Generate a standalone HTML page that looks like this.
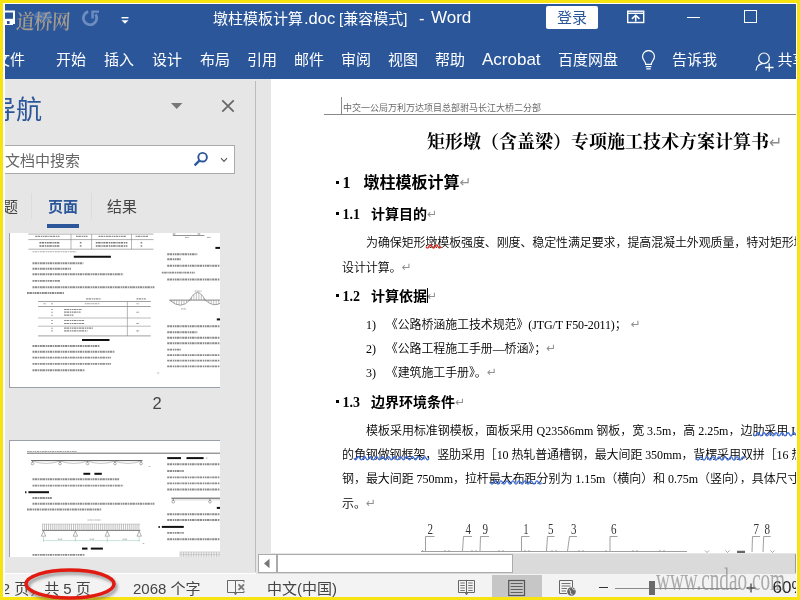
<!DOCTYPE html>
<html lang="zh-CN">
<head>
<meta charset="utf-8">
<title>墩柱模板计算.doc [兼容模式] - Word</title>
<style>
*{box-sizing:border-box;margin:0;padding:0}
html,body{width:800px;height:600px;overflow:hidden;background:#f7e30f}
body{position:relative;font-family:"Liberation Sans","Noto Sans CJK SC",sans-serif;color:#333}
#win{position:absolute;left:3px;top:3px;width:794px;height:594px;background:#fff}
#app{position:absolute;left:5px;top:4px;width:791px;height:593px;overflow:hidden;background:#fff}
#c{position:absolute;left:-5px;top:-4px;width:800px;height:600px;will-change:transform}
#c div,#c span,#c svg{position:absolute}
.t{white-space:nowrap;line-height:1}
/* title + ribbon */
#blue{left:0;top:0;width:800px;height:79px;background:#2b579a}
.tab{top:51.500px;font-size:15px;color:#fff;white-space:nowrap;line-height:15px}
.ti{font-size:15px;line-height:16px;color:#fff}
/* nav */
#nav{left:0;top:79px;width:271px;height:494px;background:#e6e6e6}
#navline{left:255px;top:81px;width:1px;height:491px;background:#bcbcbc}
/* status */
#status{left:0;top:574px;width:800px;height:26px;background:#f3f3f3}
.st{top:580.5px;font-size:15px;line-height:15px;color:#444;white-space:nowrap}
/* doc */
#doc{left:271px;top:79px;width:529px;height:474px;background:#fff;overflow:hidden}
.serif{font-family:"Liberation Serif","Noto Serif CJK SC",serif}

#c .t span{position:static}
.pm{font-family:"DejaVu Sans",sans-serif;color:#909090;font-size:12px;font-weight:400;vertical-align:1px;letter-spacing:0}
.h1{font-size:16px;line-height:22px;font-weight:700;color:#000;font-family:"Liberation Serif","Noto Sans CJK SC",serif}
.h2{font-size:14px;line-height:20px;font-weight:700;color:#000;font-family:"Liberation Serif","Noto Sans CJK SC",serif}
.bd{letter-spacing:-0.12px;font-size:12px;line-height:16px;color:#000;font-weight:350;font-family:"Liberation Serif","Noto Sans CJK SC",serif}
.bl{display:inline-block;width:7px;height:4px;overflow:hidden;vertical-align:4px;font-size:4px;line-height:4px;color:#000;background:#000;width:3px;height:3px;margin-right:3.5px}
.gap{display:inline-block}
.rw{}
.bw{}
</style>
</head>
<body>
<div id="win"></div>
<div id="app"><div id="c">
<div id="blue"></div>
<!-- title bar -->
<svg style="left:0px;top:8px" width="18" height="20" viewBox="0 0 18 20"><path d="M0 3.6H14V16" fill="none" stroke="#fff" stroke-width="2"/><rect x="0" y="10.8" width="13" height="6.2" fill="#fff"/><rect x="7" y="13" width="2.6" height="3" fill="#2b579a"/></svg>
<div style="left:34px;top:12px;width:18px;height:9px;background:#5f86c4;opacity:0.55;border-radius:5px"></div>
<div class="t" id="wm1" style="left:16px;top:8px;font-size:18.5px;line-height:24px;color:#a39b8e;font-family:'Noto Serif CJK SC',serif;font-weight:600;letter-spacing:-0.5px;transform:skewX(-3deg) scaleY(1.12);transform-origin:0 60%">道桥网</div>
<svg style="left:80px;top:8px" width="20" height="20" viewBox="0 0 20 20"><path d="M8.2 3.6A6.7 6.7 0 1 0 15.6 6.3" fill="none" stroke="#6d8dc2" stroke-width="2.7"/><path d="M12.6 10.4V3.6H19" fill="none" stroke="#6d8dc2" stroke-width="2.4"/></svg>
<svg style="left:121px;top:16px" width="8" height="9" viewBox="0 0 8 9"><rect x="0.5" y="1" width="7" height="1.4" fill="#fff"/><path d="M0.5 4.2H7.5L4 7.8Z" fill="#fff"/></svg>
<div class="t ti" style="left:213px;top:11px">墩柱模板计算</div>
<div class="t ti" style="left:304px;top:10px;font-size:16.5px">.doc</div>
<div class="t ti" style="left:339px;top:11px">[兼容模式]</div>
<div class="t ti" style="left:419px;top:10px;font-size:16.5px">-</div>
<div class="t ti" style="left:431px;top:10px;font-size:17px">Word</div>
<div style="left:546px;top:6px;width:52px;height:23px;background:#fff;border-radius:2px"></div>
<div class="t" style="left:557px;top:10px;font-size:15px;line-height:16px;color:#2b579a">登录</div>
<svg style="left:626px;top:9px" width="20" height="16" viewBox="0 0 20 16"><rect x="1.700" y="2.200" width="16" height="11.300" fill="none" stroke="#fff" stroke-width="1.400"/><path d="M1.700 4.300H17.700" stroke="#fff" stroke-width="1.400"/><path d="M9.700 12.500V6.500M5.900 9.900L9.700 6.200L13.500 9.900" fill="none" stroke="#fff" stroke-width="1.500"/></svg>
<div style="left:687px;top:16.500px;width:13px;height:1.500px;background:#fff"></div>
<div style="left:744px;top:10px;width:13px;height:13px;border:1.5px solid #fff"></div>
<!-- ribbon tabs -->
<div class="tab" style="left:-5px">文件</div>
<div class="tab" style="left:56px">开始</div>
<div class="tab" style="left:104px">插入</div>
<div class="tab" style="left:152px">设计</div>
<div class="tab" style="left:200px">布局</div>
<div class="tab" style="left:247px">引用</div>
<div class="tab" style="left:294px">邮件</div>
<div class="tab" style="left:341px">审阅</div>
<div class="tab" style="left:388px">视图</div>
<div class="tab" style="left:435px">帮助</div>
<div class="tab" style="left:482px;font-size:17px;top:52px">Acrobat</div>
<div class="tab" style="left:558px">百度网盘</div>
<svg style="left:640.500px;top:50px" width="15" height="20.500" viewBox="0 0 16 22"><path d="M5 15.5C5 12 1.6 11 1.6 7A6.4 6.4 0 0 1 14.4 7C14.4 11 11 12 11 15.5Z" fill="none" stroke="#fff" stroke-width="1.3"/><path d="M5 17.8H11M5.6 20.2H10.4" stroke="#fff" stroke-width="1.3"/></svg>
<div class="tab" style="left:672px">告诉我</div>
<svg style="left:754.300px;top:50.700px" width="22" height="22" viewBox="0 0 22 22"><circle cx="10" cy="7.3" r="5.3" fill="none" stroke="#fff" stroke-width="1.2"/><path d="M2 19.5C2.3 15.5 5 13 8.5 12.6" fill="none" stroke="#fff" stroke-width="1.2"/><path d="M11 16.5H19.5M15.2 12.3V20.8" stroke="#fff" stroke-width="1.3"/></svg>
<div class="tab" style="left:777.500px">共享</div>
<div id="nav"></div>
<div id="navline"></div>
<div class="t" style="left:-10px;top:95.5px;font-size:26px;line-height:28px;color:#2b579a;font-weight:400">导航</div>
<svg style="left:170px;top:102px" width="14" height="8" viewBox="0 0 14 8"><path d="M1 1H12.4L6.7 7Z" fill="#777"/></svg>
<svg style="left:221px;top:99px" width="14" height="14" viewBox="0 0 14 14"><path d="M1.3 1.3L12.7 12.7M12.7 1.3L1.3 12.7" stroke="#666" stroke-width="1.7" fill="none"/></svg>
<div style="left:-10px;top:145px;width:245px;height:29px;background:#fff;border:1px solid #ababab"></div>
<div class="t" style="left:-10px;top:153px;font-size:15px;line-height:16px;color:#666">在文档中搜索</div>
<svg style="left:193px;top:151px" width="16" height="16" viewBox="0 0 16 16"><circle cx="9.6" cy="6.2" r="4.3" fill="none" stroke="#2b579a" stroke-width="1.9"/><path d="M6.6 9.4L1.6 14.4" stroke="#2b579a" stroke-width="2.3"/></svg>
<svg style="left:220px;top:157px" width="8" height="6" viewBox="0 0 8 6"><path d="M1 1.2L4 4.4L7 1.2" fill="none" stroke="#555" stroke-width="1.1"/></svg>
<div class="t" style="left:-12px;top:199px;font-size:15px;line-height:16px;color:#444">标题</div>
<div class="t" style="left:48px;top:199px;font-size:15px;line-height:16px;color:#2b579a;font-weight:700">页面</div>
<div class="t" style="left:107px;top:199px;font-size:15px;line-height:16px;color:#444">结果</div>
<div style="left:47px;top:224px;width:32px;height:4px;background:#2b579a"></div>
<div style="left:31px;top:193px;width:1px;height:26px;background:#dcdcdc"></div>
<div style="left:91px;top:193px;width:1px;height:26px;background:#dcdcdc"></div>
<div id="th1" style="left:9px;top:233px;width:211px;height:155px;background:#fff;overflow:hidden;border-left:1px solid #9aa0aa;border-bottom:1px solid #9aa0aa"></div>
<svg id="ts1" style="left:9px;top:233px" width="211" height="154" viewBox="0 0 211 154">
<path d="M19.4 1.1H144.5" stroke="#777" stroke-width="0.6"/>
<path d="M19.4 6.6H144.5" stroke="#777" stroke-width="0.6"/>
<path d="M19.4 16.2H144.5" stroke="#777" stroke-width="0.6"/>
<path d="M62.0 1.1V16.2" stroke="#888" stroke-width="0.6"/>
<path d="M82.6 1.1V16.2" stroke="#888" stroke-width="0.6"/>
<path d="M122.5 1.1V16.2" stroke="#888" stroke-width="0.6"/>
<path d="M26.2 3.3H51.0" stroke="#444" stroke-width="1.3" stroke-dasharray="1.8 0.5 2.6 0.7 1.3 0.6" opacity="0.6"/>
<path d="M67.0 3.3H78.5" stroke="#444" stroke-width="1.3" stroke-dasharray="1.8 0.5 2.6 0.7 1.3 0.6" opacity="0.6"/>
<path d="M89.5 3.3H117.0" stroke="#444" stroke-width="1.3" stroke-dasharray="1.8 0.5 2.6 0.7 1.3 0.6" opacity="0.6"/>
<path d="M126.6 3.3H139.0" stroke="#444" stroke-width="1.3" stroke-dasharray="1.8 0.5 2.6 0.7 1.3 0.6" opacity="0.6"/>
<path d="M30.4 9.7H51.0" stroke="#444" stroke-width="1.4" stroke-dasharray="1.8 0.5 2.6 0.7 1.3 0.6" opacity="0.7"/>
<path d="M70.8 9.7H72.5" stroke="#444" stroke-width="1.4" stroke-dasharray="1.8 0.5 2.6 0.7 1.3 0.6" opacity="0.7"/>
<path d="M86.8 9.7H118.4" stroke="#444" stroke-width="1.4" stroke-dasharray="1.8 0.5 2.6 0.7 1.3 0.6" opacity="0.7"/>
<path d="M131.6 9.7H133.2" stroke="#444" stroke-width="1.4" stroke-dasharray="1.8 0.5 2.6 0.7 1.3 0.6" opacity="0.7"/>
<path d="M30.4 13.0H51.0" stroke="#444" stroke-width="1.4" stroke-dasharray="1.8 0.5 2.6 0.7 1.3 0.6" opacity="0.7"/>
<path d="M70.8 13.0H72.5" stroke="#444" stroke-width="1.4" stroke-dasharray="1.8 0.5 2.6 0.7 1.3 0.6" opacity="0.7"/>
<path d="M86.8 13.0H118.4" stroke="#444" stroke-width="1.4" stroke-dasharray="1.8 0.5 2.6 0.7 1.3 0.6" opacity="0.7"/>
<path d="M131.6 13.0H133.2" stroke="#444" stroke-width="1.4" stroke-dasharray="1.8 0.5 2.6 0.7 1.3 0.6" opacity="0.7"/>
<path d="M23.5 18.7H67.5" stroke="#444" stroke-width="1.1" stroke-dasharray="1.8 0.5 2.6 0.7 1.3 0.6" opacity="0.45"/>
<path d="M64.8 23.7H101.9" stroke="#111" stroke-width="2"/>
<path d="M23.5 30.3H74.4" stroke="#444" stroke-width="1.9" stroke-dasharray="1.8 0.5 2.6 0.7 1.3 0.6" opacity="0.62"/>
<path d="M23.5 35.8H62.0" stroke="#444" stroke-width="1.9" stroke-dasharray="1.8 0.5 2.6 0.7 1.3 0.6" opacity="0.62"/>
<path d="M23.5 41.3H114.2" stroke="#444" stroke-width="1.9" stroke-dasharray="1.8 0.5 2.6 0.7 1.3 0.6" opacity="0.62"/>
<path d="M23.5 47.9H51.0" stroke="#444" stroke-width="1.9" stroke-dasharray="1.8 0.5 2.6 0.7 1.3 0.6" opacity="0.62"/>
<path d="M23.5 54.2H145.9" stroke="#444" stroke-width="1.9" stroke-dasharray="1.8 0.5 2.6 0.7 1.3 0.6" opacity="0.62"/>
<path d="M18.0 60.0H55.1" stroke="#444" stroke-width="1.9" stroke-dasharray="1.8 0.5 2.6 0.7 1.3 0.6" opacity="0.62"/>
<path d="M77.1 65.8H92.2" stroke="#444" stroke-width="1.2" stroke-dasharray="1.8 0.5 2.6 0.7 1.3 0.6" opacity="0.6"/>
<path d="M127.5 65.8H136.8" stroke="#444" stroke-width="1.2" stroke-dasharray="1.8 0.5 2.6 0.7 1.3 0.6" opacity="0.6"/>
<path d="M29.0 68.5H141.8" stroke="#777" stroke-width="0.7"/>
<path d="M29.0 73.5H141.8" stroke="#777" stroke-width="0.7"/>
<path d="M29.0 85.0H141.8" stroke="#777" stroke-width="0.5"/>
<path d="M29.0 93.2H141.8" stroke="#777" stroke-width="0.5"/>
<path d="M29.0 102.9H141.8" stroke="#777" stroke-width="0.7"/>
<path d="M118.4 68.5V102.9" stroke="#888" stroke-width="0.6"/>
<path d="M34.5 70.7H37.2" stroke="#444" stroke-width="1.1" stroke-dasharray="1.8 0.5 2.6 0.7 1.3 0.6" opacity="0.5"/>
<path d="M42.2 70.7H44.4" stroke="#444" stroke-width="1.1" stroke-dasharray="1.8 0.5 2.6 0.7 1.3 0.6" opacity="0.5"/>
<path d="M75.8 70.7H90.9" stroke="#444" stroke-width="1.1" stroke-dasharray="1.8 0.5 2.6 0.7 1.3 0.6" opacity="0.5"/>
<path d="M127.5 70.7H130.2" stroke="#444" stroke-width="1.1" stroke-dasharray="1.8 0.5 2.6 0.7 1.3 0.6" opacity="0.5"/>
<path d="M42.2 76.5H43.9" stroke="#444" stroke-width="1.1" stroke-dasharray="1.8 0.5 2.6 0.7 1.3 0.6" opacity="0.5"/>
<path d="M55.1 76.5H73.0" stroke="#444" stroke-width="1.2" stroke-dasharray="1.8 0.5 2.6 0.7 1.3 0.6" opacity="0.65"/>
<path d="M42.2 79.2H43.9" stroke="#444" stroke-width="1.1" stroke-dasharray="1.8 0.5 2.6 0.7 1.3 0.6" opacity="0.5"/>
<path d="M55.1 79.2H71.6" stroke="#444" stroke-width="1.2" stroke-dasharray="1.8 0.5 2.6 0.7 1.3 0.6" opacity="0.65"/>
<path d="M127.5 79.2H130.2" stroke="#444" stroke-width="1.1" stroke-dasharray="1.8 0.5 2.6 0.7 1.3 0.6" opacity="0.6"/>
<path d="M42.2 82.2H43.9" stroke="#444" stroke-width="1.1" stroke-dasharray="1.8 0.5 2.6 0.7 1.3 0.6" opacity="0.5"/>
<path d="M55.1 82.2H64.8" stroke="#444" stroke-width="1.2" stroke-dasharray="1.8 0.5 2.6 0.7 1.3 0.6" opacity="0.65"/>
<path d="M42.2 87.5H43.9" stroke="#444" stroke-width="1.1" stroke-dasharray="1.8 0.5 2.6 0.7 1.3 0.6" opacity="0.5"/>
<path d="M55.1 87.5H75.8" stroke="#444" stroke-width="1.2" stroke-dasharray="1.8 0.5 2.6 0.7 1.3 0.6" opacity="0.65"/>
<path d="M42.2 90.5H43.9" stroke="#444" stroke-width="1.1" stroke-dasharray="1.8 0.5 2.6 0.7 1.3 0.6" opacity="0.5"/>
<path d="M55.1 90.5H75.8" stroke="#444" stroke-width="1.2" stroke-dasharray="1.8 0.5 2.6 0.7 1.3 0.6" opacity="0.65"/>
<path d="M127.5 90.5H130.2" stroke="#444" stroke-width="1.1" stroke-dasharray="1.8 0.5 2.6 0.7 1.3 0.6" opacity="0.6"/>
<path d="M42.2 95.2H43.9" stroke="#444" stroke-width="1.1" stroke-dasharray="1.8 0.5 2.6 0.7 1.3 0.6" opacity="0.5"/>
<path d="M55.1 95.2H84.0" stroke="#444" stroke-width="1.2" stroke-dasharray="1.8 0.5 2.6 0.7 1.3 0.6" opacity="0.65"/>
<path d="M42.2 97.9H43.9" stroke="#444" stroke-width="1.1" stroke-dasharray="1.8 0.5 2.6 0.7 1.3 0.6" opacity="0.5"/>
<path d="M55.1 97.9H78.5" stroke="#444" stroke-width="1.2" stroke-dasharray="1.8 0.5 2.6 0.7 1.3 0.6" opacity="0.65"/>
<path d="M127.5 97.9H130.2" stroke="#444" stroke-width="1.1" stroke-dasharray="1.8 0.5 2.6 0.7 1.3 0.6" opacity="0.6"/>
<path d="M73.0 107.0H100.5" stroke="#111" stroke-width="2"/>
<path d="M23.5 113.0H90.9" stroke="#444" stroke-width="1.9" stroke-dasharray="1.8 0.5 2.6 0.7 1.3 0.6" opacity="0.62"/>
<path d="M23.5 118.8H106.0" stroke="#444" stroke-width="1.9" stroke-dasharray="1.8 0.5 2.6 0.7 1.3 0.6" opacity="0.62"/>
<path d="M23.5 124.6H101.9" stroke="#444" stroke-width="1.9" stroke-dasharray="1.8 0.5 2.6 0.7 1.3 0.6" opacity="0.62"/>
<path d="M23.5 130.9H101.9" stroke="#444" stroke-width="1.9" stroke-dasharray="1.8 0.5 2.6 0.7 1.3 0.6" opacity="0.62"/>
<path d="M23.5 137.2H75.8" stroke="#444" stroke-width="1.9" stroke-dasharray="1.8 0.5 2.6 0.7 1.3 0.6" opacity="0.62"/>
<path d="M163.8 2.5H195.4" stroke="#666" stroke-width="0.7"/>
<circle cx="165.1" cy="0.9" r="1" fill="none" stroke="#777" stroke-width="0.5"/><circle cx="189.9" cy="0.9" r="1" fill="none" stroke="#777" stroke-width="0.5"/>
<path d="M176.1 4.4H179.7" stroke="#444" stroke-width="1" stroke-dasharray="1.8 0.5 2.6 0.7 1.3 0.6" opacity="0.5"/>
<path d="M198.1 4.4H201.7" stroke="#444" stroke-width="1" stroke-dasharray="1.8 0.5 2.6 0.7 1.3 0.6" opacity="0.5"/>
<path d="M206.4 14.9H213.2" stroke="#111" stroke-width="2"/>
<path d="M158.2 21.2H188.5" stroke="#444" stroke-width="1.9" stroke-dasharray="1.8 0.5 2.6 0.7 1.3 0.6" opacity="0.62"/>
<path d="M158.2 26.2H172.0" stroke="#444" stroke-width="1.9" stroke-dasharray="1.8 0.5 2.6 0.7 1.3 0.6" opacity="0.62"/>
<path d="M158.2 32.8H213.2" stroke="#444" stroke-width="1.9" stroke-dasharray="1.8 0.5 2.6 0.7 1.3 0.6" opacity="0.62"/>
<path d="M152.8 39.6H185.8" stroke="#444" stroke-width="1.9" stroke-dasharray="1.8 0.5 2.6 0.7 1.3 0.6" opacity="0.62"/>
<path d="M158.2 46.5H213.2" stroke="#444" stroke-width="1.9" stroke-dasharray="1.8 0.5 2.6 0.7 1.3 0.6" opacity="0.62"/>
<path d="M160.5 67.1H213.2" stroke="#555" stroke-width="0.7"/>
<path d="M160.5 67.1Q172.0 77.3 180.8 67.1Q188.5 52.0 196.2 67.1Q205.0 75.4 213.2 69.0" fill="none" stroke="#666" stroke-width="0.6"/>
<path d="M162.7 67.1V68.8" stroke="#777" stroke-width="0.45"/>
<path d="M165.1 67.1V70.4" stroke="#777" stroke-width="0.45"/>
<path d="M167.6 67.1V71.5" stroke="#777" stroke-width="0.45"/>
<path d="M170.1 67.1V72.1" stroke="#777" stroke-width="0.45"/>
<path d="M172.6 67.1V71.9" stroke="#777" stroke-width="0.45"/>
<path d="M175.0 67.1V71.0" stroke="#777" stroke-width="0.45"/>
<path d="M177.5 67.1V69.5" stroke="#777" stroke-width="0.45"/>
<path d="M180.0 67.1V67.8" stroke="#777" stroke-width="0.45"/>
<path d="M182.5 67.1V64.7" stroke="#777" stroke-width="0.45"/>
<path d="M184.9 67.1V61.6" stroke="#777" stroke-width="0.45"/>
<path d="M187.4 67.1V59.9" stroke="#777" stroke-width="0.45"/>
<path d="M189.9 67.1V60.0" stroke="#777" stroke-width="0.45"/>
<path d="M192.3 67.1V61.9" stroke="#777" stroke-width="0.45"/>
<path d="M194.8 67.1V65.1" stroke="#777" stroke-width="0.45"/>
<path d="M197.3 67.1V67.9" stroke="#777" stroke-width="0.45"/>
<path d="M199.8 67.1V69.5" stroke="#777" stroke-width="0.45"/>
<path d="M202.2 67.1V70.7" stroke="#777" stroke-width="0.45"/>
<path d="M204.7 67.1V71.4" stroke="#777" stroke-width="0.45"/>
<path d="M207.2 67.1V71.5" stroke="#777" stroke-width="0.45"/>
<path d="M209.7 67.1V70.8" stroke="#777" stroke-width="0.45"/>
<path d="M212.2 67.1V69.6" stroke="#777" stroke-width="0.45"/>
<path d="M185.8 58.1H192.6" stroke="#444" stroke-width="0.9" stroke-dasharray="1.8 0.5 2.6 0.7 1.3 0.6" opacity="0.5"/>
<path d="M172.0 75.9H177.5" stroke="#444" stroke-width="0.9" stroke-dasharray="1.8 0.5 2.6 0.7 1.3 0.6" opacity="0.5"/>
<path d="M207.8 86.4H213.2" stroke="#111" stroke-width="2"/>
<path d="M158.2 93.2H213.2" stroke="#444" stroke-width="1.9" stroke-dasharray="1.8 0.5 2.6 0.7 1.3 0.6" opacity="0.62"/>
<path d="M158.2 99.3H188.5" stroke="#444" stroke-width="1.9" stroke-dasharray="1.8 0.5 2.6 0.7 1.3 0.6" opacity="0.62"/>
<path d="M158.2 104.8H213.2" stroke="#444" stroke-width="1.9" stroke-dasharray="1.8 0.5 2.6 0.7 1.3 0.6" opacity="0.62"/>
<path d="M158.2 110.3H213.2" stroke="#444" stroke-width="1.9" stroke-dasharray="1.8 0.5 2.6 0.7 1.3 0.6" opacity="0.62"/>
<path d="M158.2 116.6H172.0" stroke="#444" stroke-width="1.9" stroke-dasharray="1.8 0.5 2.6 0.7 1.3 0.6" opacity="0.62"/>
<path d="M158.2 122.1H213.2" stroke="#444" stroke-width="1.9" stroke-dasharray="1.8 0.5 2.6 0.7 1.3 0.6" opacity="0.62"/>
<path d="M158.2 127.6H213.2" stroke="#444" stroke-width="1.9" stroke-dasharray="1.8 0.5 2.6 0.7 1.3 0.6" opacity="0.62"/>
<path d="M158.2 133.4H213.2" stroke="#444" stroke-width="1.9" stroke-dasharray="1.8 0.5 2.6 0.7 1.3 0.6" opacity="0.62"/>
<path d="M148.1 140.0H150.6" stroke="#444" stroke-width="0.8" stroke-dasharray="1.8 0.5 2.6 0.7 1.3 0.6" opacity="0.5"/>
</svg>
<div class="t" style="left:152.500px;top:395px;font-size:16.500px;line-height:17px;color:#444">2</div>
<div id="th2" style="left:9px;top:440px;width:211px;height:117px;background:#fff;overflow:hidden;border-left:1px solid #9aa0aa;border-top:1px solid #9aa0aa"></div>
<svg id="ts2" style="left:9px;top:441px" width="211" height="116" viewBox="0 0 211 116">
<path d="M18.0 10.5H67.5" stroke="#444" stroke-width="1" stroke-dasharray="1.8 0.5 2.6 0.7 1.3 0.6" opacity="0.5"/>
<path d="M18.0 12.2H213.2" stroke="#444" stroke-width="0.8"/>
<path d="M22.1 19.6H133.5" stroke="#444" stroke-width="0.9"/>
<path d="M23.5 20.1Q37.2 24.8 51.0 20.1" fill="none" stroke="#888" stroke-width="0.5"/>
<path d="M51.0 20.1Q64.8 24.8 78.5 20.1" fill="none" stroke="#888" stroke-width="0.5"/>
<path d="M78.5 20.1Q92.2 24.8 106.0 20.1" fill="none" stroke="#888" stroke-width="0.5"/>
<path d="M106.0 20.1Q119.1 24.8 132.1 20.1" fill="none" stroke="#888" stroke-width="0.5"/>
<circle cx="23.5" cy="22.6" r="1.3" fill="none" stroke="#666" stroke-width="0.5"/>
<path d="M23.5 19.6V21.5" stroke="#666" stroke-width="0.6"/>
<circle cx="51.0" cy="22.6" r="1.3" fill="none" stroke="#666" stroke-width="0.5"/>
<path d="M51.0 19.6V21.5" stroke="#666" stroke-width="0.6"/>
<circle cx="78.5" cy="22.6" r="1.3" fill="none" stroke="#666" stroke-width="0.5"/>
<path d="M78.5 19.6V21.5" stroke="#666" stroke-width="0.6"/>
<circle cx="106.0" cy="22.6" r="1.3" fill="none" stroke="#666" stroke-width="0.5"/>
<path d="M106.0 19.6V21.5" stroke="#666" stroke-width="0.6"/>
<circle cx="132.1" cy="22.6" r="1.3" fill="none" stroke="#666" stroke-width="0.5"/>
<path d="M132.1 19.6V21.5" stroke="#666" stroke-width="0.6"/>
<path d="M139.6 25.6H141.8" stroke="#444" stroke-width="0.8" stroke-dasharray="1.8 0.5 2.6 0.7 1.3 0.6" opacity="0.5"/>
<path d="M74.4 32.8H81.2" stroke="#111" stroke-width="2"/>
<path d="M85.4 32.8H92.8" stroke="#111" stroke-width="2"/>
<path d="M23.5 38.3H110.1" stroke="#444" stroke-width="1.9" stroke-dasharray="1.8 0.5 2.6 0.7 1.3 0.6" opacity="0.62"/>
<path d="M23.5 44.6H114.2" stroke="#444" stroke-width="1.9" stroke-dasharray="1.8 0.5 2.6 0.7 1.3 0.6" opacity="0.62"/>
<path d="M16.1 51.2H17.4" stroke="#111" stroke-width="2"/>
<path d="M19.4 51.2H40.0" stroke="#111" stroke-width="2"/>
<path d="M23.5 57.0H42.8" stroke="#444" stroke-width="1.9" stroke-dasharray="1.8 0.5 2.6 0.7 1.3 0.6" opacity="0.62"/>
<path d="M23.5 62.8H145.9" stroke="#444" stroke-width="1.9" stroke-dasharray="1.8 0.5 2.6 0.7 1.3 0.6" opacity="0.62"/>
<path d="M18.0 68.5H92.2" stroke="#444" stroke-width="1.9" stroke-dasharray="1.8 0.5 2.6 0.7 1.3 0.6" opacity="0.62"/>
<path d="M78.5 79.0H92.2" stroke="#444" stroke-width="0.9" stroke-dasharray="1.8 0.5 2.6 0.7 1.3 0.6" opacity="0.45"/>
<path d="M33.1 89.4H131.3" stroke="#555" stroke-width="0.8"/>
<path d="M33.1 83.1H131.3" stroke="#999" stroke-width="0.4"/>
<path d="M33.7 83.1V89.2" stroke="#777" stroke-width="0.45"/>
<path d="M35.6 83.1V89.2" stroke="#777" stroke-width="0.45"/>
<path d="M37.5 83.1V89.2" stroke="#777" stroke-width="0.45"/>
<path d="M39.5 83.1V89.2" stroke="#777" stroke-width="0.45"/>
<path d="M41.4 83.1V89.2" stroke="#777" stroke-width="0.45"/>
<path d="M43.3 83.1V89.2" stroke="#777" stroke-width="0.45"/>
<path d="M45.2 83.1V89.2" stroke="#777" stroke-width="0.45"/>
<path d="M47.1 83.1V89.2" stroke="#777" stroke-width="0.45"/>
<path d="M49.1 83.1V89.2" stroke="#777" stroke-width="0.45"/>
<path d="M51.0 83.1V89.2" stroke="#777" stroke-width="0.45"/>
<path d="M52.9 83.1V89.2" stroke="#777" stroke-width="0.45"/>
<path d="M54.9 83.1V89.2" stroke="#777" stroke-width="0.45"/>
<path d="M56.8 83.1V89.2" stroke="#777" stroke-width="0.45"/>
<path d="M58.7 83.1V89.2" stroke="#777" stroke-width="0.45"/>
<path d="M60.6 83.1V89.2" stroke="#777" stroke-width="0.45"/>
<path d="M62.5 83.1V89.2" stroke="#777" stroke-width="0.45"/>
<path d="M64.5 83.1V89.2" stroke="#777" stroke-width="0.45"/>
<path d="M66.4 83.1V89.2" stroke="#777" stroke-width="0.45"/>
<path d="M68.3 83.1V89.2" stroke="#777" stroke-width="0.45"/>
<path d="M70.2 83.1V89.2" stroke="#777" stroke-width="0.45"/>
<path d="M72.2 83.1V89.2" stroke="#777" stroke-width="0.45"/>
<path d="M74.1 83.1V89.2" stroke="#777" stroke-width="0.45"/>
<path d="M76.0 83.1V89.2" stroke="#777" stroke-width="0.45"/>
<path d="M78.0 83.1V89.2" stroke="#777" stroke-width="0.45"/>
<path d="M79.9 83.1V89.2" stroke="#777" stroke-width="0.45"/>
<path d="M81.8 83.1V89.2" stroke="#777" stroke-width="0.45"/>
<path d="M83.7 83.1V89.2" stroke="#777" stroke-width="0.45"/>
<path d="M85.7 83.1V89.2" stroke="#777" stroke-width="0.45"/>
<path d="M87.6 83.1V89.2" stroke="#777" stroke-width="0.45"/>
<path d="M89.5 83.1V89.2" stroke="#777" stroke-width="0.45"/>
<path d="M91.4 83.1V89.2" stroke="#777" stroke-width="0.45"/>
<path d="M93.4 83.1V89.2" stroke="#777" stroke-width="0.45"/>
<path d="M95.3 83.1V89.2" stroke="#777" stroke-width="0.45"/>
<path d="M97.2 83.1V89.2" stroke="#777" stroke-width="0.45"/>
<path d="M99.1 83.1V89.2" stroke="#777" stroke-width="0.45"/>
<path d="M101.0 83.1V89.2" stroke="#777" stroke-width="0.45"/>
<path d="M103.0 83.1V89.2" stroke="#777" stroke-width="0.45"/>
<path d="M104.9 83.1V89.2" stroke="#777" stroke-width="0.45"/>
<path d="M106.8 83.1V89.2" stroke="#777" stroke-width="0.45"/>
<path d="M108.8 83.1V89.2" stroke="#777" stroke-width="0.45"/>
<path d="M110.7 83.1V89.2" stroke="#777" stroke-width="0.45"/>
<path d="M112.6 83.1V89.2" stroke="#777" stroke-width="0.45"/>
<path d="M114.5 83.1V89.2" stroke="#777" stroke-width="0.45"/>
<path d="M116.5 83.1V89.2" stroke="#777" stroke-width="0.45"/>
<path d="M118.4 83.1V89.2" stroke="#777" stroke-width="0.45"/>
<path d="M120.3 83.1V89.2" stroke="#777" stroke-width="0.45"/>
<path d="M122.2 83.1V89.2" stroke="#777" stroke-width="0.45"/>
<path d="M124.2 83.1V89.2" stroke="#777" stroke-width="0.45"/>
<path d="M126.1 83.1V89.2" stroke="#777" stroke-width="0.45"/>
<path d="M128.0 83.1V89.2" stroke="#777" stroke-width="0.45"/>
<path d="M129.9 83.1V89.2" stroke="#777" stroke-width="0.45"/>
<path d="M34.5 90.0L32.3 95.2H36.7Z" fill="none" stroke="#666" stroke-width="0.5"/>
<path d="M34.5 96.3V100.7" stroke="#5a9" stroke-width="0.4"/>
<path d="M66.4 90.0L64.2 95.2H68.6Z" fill="none" stroke="#666" stroke-width="0.5"/>
<path d="M66.4 96.3V100.7" stroke="#5a9" stroke-width="0.4"/>
<path d="M98.3 90.0L96.1 95.2H100.5Z" fill="none" stroke="#666" stroke-width="0.5"/>
<path d="M98.3 96.3V100.7" stroke="#5a9" stroke-width="0.4"/>
<path d="M130.2 90.0L128.0 95.2H132.4Z" fill="none" stroke="#666" stroke-width="0.5"/>
<path d="M130.2 96.3V100.7" stroke="#5a9" stroke-width="0.4"/>
<path d="M34.5 99.6H130.2" stroke="#7ba" stroke-width="0.4"/>
<path d="M48.8 98.2H53.2" stroke="#444" stroke-width="0.9" stroke-dasharray="1.8 0.5 2.6 0.7 1.3 0.6" opacity="0.5"/>
<path d="M80.7 98.2H85.1" stroke="#444" stroke-width="0.9" stroke-dasharray="1.8 0.5 2.6 0.7 1.3 0.6" opacity="0.5"/>
<path d="M113.7 98.2H118.1" stroke="#444" stroke-width="0.9" stroke-dasharray="1.8 0.5 2.6 0.7 1.3 0.6" opacity="0.5"/>
<path d="M133.5 102.6H135.4" stroke="#444" stroke-width="0.8" stroke-dasharray="1.8 0.5 2.6 0.7 1.3 0.6" opacity="0.5"/>
<path d="M73.0 107.6H78.5" stroke="#111" stroke-width="2"/>
<path d="M81.8 107.6H93.9" stroke="#111" stroke-width="2"/>
<path d="M23.5 113.9H75.8" stroke="#444" stroke-width="1.9" stroke-dasharray="1.8 0.5 2.6 0.7 1.3 0.6" opacity="0.62"/>
<path d="M158.2 17.1H172.0" stroke="#111" stroke-width="2"/>
<path d="M177.5 17.1H194.6" stroke="#111" stroke-width="2"/>
<path d="M196.8 17.1H199.0" stroke="#444" stroke-width="0.8" stroke-dasharray="1.8 0.5 2.6 0.7 1.3 0.6" opacity="0.5"/>
<path d="M158.2 23.2H213.2" stroke="#444" stroke-width="1.9" stroke-dasharray="1.8 0.5 2.6 0.7 1.3 0.6" opacity="0.62"/>
<path d="M158.2 30.0H174.8" stroke="#444" stroke-width="1.9" stroke-dasharray="1.8 0.5 2.6 0.7 1.3 0.6" opacity="0.62"/>
<path d="M158.2 36.4H213.2" stroke="#444" stroke-width="1.9" stroke-dasharray="1.8 0.5 2.6 0.7 1.3 0.6" opacity="0.62"/>
<path d="M158.2 42.4H213.2" stroke="#444" stroke-width="1.9" stroke-dasharray="1.8 0.5 2.6 0.7 1.3 0.6" opacity="0.62"/>
<path d="M158.2 48.5H213.2" stroke="#444" stroke-width="1.9" stroke-dasharray="1.8 0.5 2.6 0.7 1.3 0.6" opacity="0.62"/>
<path d="M162.4 57.2H213.2" stroke="#444" stroke-width="0.9"/>
<path d="M162.4 58.9H213.2" stroke="#999" stroke-width="0.4"/>
<circle cx="164.3" cy="60.8" r="1.3" fill="none" stroke="#666" stroke-width="0.5"/>
<path d="M164.3 57.2V60.0" stroke="#666" stroke-width="0.6"/>
<circle cx="200.9" cy="60.8" r="1.3" fill="none" stroke="#666" stroke-width="0.5"/>
<path d="M200.9 57.2V60.0" stroke="#666" stroke-width="0.6"/>
<path d="M207.8 66.9H213.2" stroke="#111" stroke-width="2"/>
<path d="M158.2 73.2H213.2" stroke="#444" stroke-width="1.9" stroke-dasharray="1.8 0.5 2.6 0.7 1.3 0.6" opacity="0.62"/>
<path d="M158.2 79.0H213.2" stroke="#444" stroke-width="1.9" stroke-dasharray="1.8 0.5 2.6 0.7 1.3 0.6" opacity="0.62"/>
<path d="M149.5 85.9H150.8" stroke="#111" stroke-width="2"/>
<path d="M152.8 85.9H174.8" stroke="#111" stroke-width="2"/>
<path d="M158.2 91.9H174.8" stroke="#444" stroke-width="1.9" stroke-dasharray="1.8 0.5 2.6 0.7 1.3 0.6" opacity="0.62"/>
<path d="M158.2 98.2H213.2" stroke="#444" stroke-width="1.9" stroke-dasharray="1.8 0.5 2.6 0.7 1.3 0.6" opacity="0.62"/>
<path d="M171.2 110.9V116.7" stroke="#999" stroke-width="0.5"/>
<path d="M172.8 110.9V116.7" stroke="#999" stroke-width="0.5"/>
<path d="M174.5 110.9V116.7" stroke="#999" stroke-width="0.5"/>
<path d="M176.1 110.9V116.7" stroke="#999" stroke-width="0.5"/>
<path d="M177.8 110.9V116.7" stroke="#999" stroke-width="0.5"/>
<path d="M179.4 110.9V116.7" stroke="#999" stroke-width="0.5"/>
<path d="M181.1 110.9V116.7" stroke="#999" stroke-width="0.5"/>
<path d="M182.7 110.9V116.7" stroke="#999" stroke-width="0.5"/>
<path d="M184.4 110.9V116.7" stroke="#999" stroke-width="0.5"/>
<path d="M186.0 110.9V116.7" stroke="#999" stroke-width="0.5"/>
<path d="M187.7 110.9V116.7" stroke="#999" stroke-width="0.5"/>
<path d="M189.3 110.9V116.7" stroke="#999" stroke-width="0.5"/>
<path d="M191.0 110.9V116.7" stroke="#999" stroke-width="0.5"/>
<path d="M192.6 110.9V116.7" stroke="#999" stroke-width="0.5"/>
<path d="M194.3 110.9V116.7" stroke="#999" stroke-width="0.5"/>
<path d="M195.9 110.9V116.7" stroke="#999" stroke-width="0.5"/>
<path d="M197.6 110.9V116.7" stroke="#999" stroke-width="0.5"/>
<path d="M199.2 110.9V116.7" stroke="#999" stroke-width="0.5"/>
<path d="M200.9 110.9V116.7" stroke="#999" stroke-width="0.5"/>
<path d="M202.5 110.9V116.7" stroke="#999" stroke-width="0.5"/>
<path d="M204.2 110.9V116.7" stroke="#999" stroke-width="0.5"/>
<path d="M205.8 110.9V116.7" stroke="#999" stroke-width="0.5"/>
<path d="M207.5 110.9V116.7" stroke="#999" stroke-width="0.5"/>
<path d="M209.1 110.9V116.7" stroke="#999" stroke-width="0.5"/>
<path d="M210.8 110.9V116.7" stroke="#999" stroke-width="0.5"/>
<path d="M212.4 110.9V116.7" stroke="#999" stroke-width="0.5"/>
<path d="M170.6 110.9H213.2" stroke="#aaa" stroke-width="0.4"/>
<path d="M170.6 113.6H213.2" stroke="#aaa" stroke-width="0.4"/>
</svg>
<div id="doc"></div>
<div style="left:341px;top:97px;width:1px;height:18px;background:#8a8a8a"></div>
<div style="left:324px;top:114px;width:480px;height:1px;background:#8a8a8a"></div>
<div class="t" id="hdr" style="left:343px;top:103px;font-size:9px;line-height:10px;color:#6a6a6a">中交一公局万利万达项目总部驸马长江大桥二分部</div>
<div class="t serif" id="dt" style="left:427px;top:130.5px;font-size:18px;line-height:22px;color:#000;font-weight:700">矩形墩（含盖梁）专项施工技术方案计算书<span class="pm" style="font-size:16px;vertical-align:0;color:#8c8c8c">↵</span></div>
<div class="t serif h1" id="h1" style="left:336px;top:171px"><span class="bl">▪</span>1<span class="gap" style="width:13px"></span>墩柱模板计算<span class="pm" style="font-size:14px">↵</span></div>
<div class="t serif h2" id="h11" style="left:336px;top:204px"><span class="bl">▪</span>1.1<span class="gap" style="width:11px"></span>计算目的<span class="pm">↵</span></div>
<div class="t serif bd" id="b1" style="left:366px;top:235px">为确保矩形<span class="rw">墩</span>模板强度、刚度、稳定性满足要求，提高混凝土外观质量，特对矩形墩</div>
<div class="t serif bd" id="b2" style="left:342px;top:259px">设计计算。<span class="pm">↵</span></div>
<div class="t serif h2" id="h12" style="left:336px;top:286px"><span class="bl">▪</span>1.2<span class="gap" style="width:11px"></span>计算依据<span class="pm">↵</span></div>
<div class="t serif bd" id="l1" style="left:366px;top:316px">1)<span class="gap" style="width:10px"></span>《公路桥涵施工技术规范》(JTG/T F50-2011)；<span class="pm"> ↵</span></div>
<div class="t serif bd" id="l2" style="left:366px;top:340px">2)<span class="gap" style="width:10px"></span>《公路工程施工手册—桥涵》；<span class="pm">↵</span></div>
<div class="t serif bd" id="l3" style="left:366px;top:364px">3)<span class="gap" style="width:10px"></span>《建筑施工手册》。<span class="pm">↵</span></div>
<div class="t serif h2" id="h13" style="left:336px;top:392px"><span class="bl">▪</span>1.3<span class="gap" style="width:11px"></span>边界环境条件<span class="pm">↵</span></div>
<div class="t serif bd" id="p1" style="letter-spacing:-0.03px;left:366px;top:422.5px">模板采用标准钢模板，面板采用 Q235δ6mm 钢板，宽 3.5m，高 2.25m，<span class="bw">边肋采用 L</span>75×8</div>
<div class="t serif bd" id="p2" style="letter-spacing:-0.1px;left:342px;top:447px">的<span class="bw">角钢做钢框架</span>，竖肋采用［10 热轧普通槽钢，最大间距 350mm，<span class="bw">背楞采用</span>双拼［16 热轧槽</div>
<div class="t serif bd" id="p3" style="letter-spacing:-0.06px;left:342px;top:471px">钢，最大间距 750mm，拉杆<span class="bw">最大布距</span>分别为 1.15m（横向）和 0.75m（竖向），具体尺寸如图所</div>
<div class="t serif bd" id="p4" style="left:342px;top:495px">示。<span class="pm">↵</span></div>
<svg id="wv" style="left:0;top:0" width="800" height="600" viewBox="0 0 800 600">
<path d="M426 246.5q1.5 3.2 3 0q1.5 -3.2 3 0q1.5 3.2 3 0q1.5 -3.2 3 0q1.5 3.2 3 0" fill="none" stroke="#e3241c" stroke-width="1.4"/>
<path d="M354 458.3q1.5 3.2 3 0q1.5 -3.2 3 0q1.5 3.2 3 0q1.5 -3.2 3 0q1.5 3.2 3 0q1.5 -3.2 3 0q1.5 3.2 3 0q1.5 -3.2 3 0q1.5 3.2 3 0q1.5 -3.2 3 0q1.5 3.2 3 0q1.5 -3.2 3 0q1.5 3.2 3 0q1.5 -3.2 3 0q1.5 3.2 3 0q1.5 -3.2 3 0q1.5 3.2 3 0q1.5 -3.2 3 0q1.5 3.2 3 0q1.5 -3.2 3 0q1.5 3.2 3 0q1.5 -3.2 3 0q1.5 3.2 3 0q1.5 -3.2 3 0q1.5 3.2 3 0" fill="none" stroke="#3d6fe0" stroke-width="1.4"/>
<path d="M490.5 482.5q1.5 3.2 3 0q1.5 -3.2 3 0q1.5 3.2 3 0q1.5 -3.2 3 0q1.5 3.2 3 0q1.5 -3.2 3 0q1.5 3.2 3 0q1.5 -3.2 3 0q1.5 3.2 3 0q1.5 -3.2 3 0q1.5 3.2 3 0q1.5 -3.2 3 0q1.5 3.2 3 0q1.5 -3.2 3 0q1.5 3.2 3 0q1.5 -3.2 3 0q1.5 3.2 3 0" fill="none" stroke="#3d6fe0" stroke-width="1.4"/>
<path d="M753.5 434.3q1.5 3.2 3 0q1.5 -3.2 3 0q1.5 3.2 3 0q1.5 -3.2 3 0q1.5 3.2 3 0q1.5 -3.2 3 0q1.5 3.2 3 0q1.5 -3.2 3 0q1.5 3.2 3 0q1.5 -3.2 3 0q1.5 3.2 3 0q1.5 -3.2 3 0q1.5 3.2 3 0q1.5 -3.2 3 0q1.5 3.2 3 0q1.5 -3.2 3 0" fill="none" stroke="#3d6fe0" stroke-width="1.4"/>
<path d="M696.5 458.5q1.5 3.2 3 0q1.5 -3.2 3 0q1.5 3.2 3 0q1.5 -3.2 3 0q1.5 3.2 3 0q1.5 -3.2 3 0q1.5 3.2 3 0q1.5 -3.2 3 0q1.5 3.2 3 0q1.5 -3.2 3 0q1.5 3.2 3 0q1.5 -3.2 3 0q1.5 3.2 3 0q1.5 -3.2 3 0q1.5 3.2 3 0q1.5 -3.2 3 0" fill="none" stroke="#3d6fe0" stroke-width="1.4"/>
</svg>
<svg id="fig" style="left:400px;top:515px" width="400" height="40" viewBox="0 0 400 40" font-family="Liberation Serif, serif" font-size="14" fill="#333">
<g stroke="#808080" stroke-width="0.75" fill="none">
<path d="M21 36.500H287"/>
<path d="M34.500 21.500H25.500V36M72 21.500H63.500L62.500 36M89 21.500H80.500L80 36M129.500 21.500H121.500V36M154.500 21.500H147.500L146.500 36M177 21.500H169.500L167.500 36M217.500 21.500H210V36M360 21.500H352.500L352 37M370.700 21.500H363.700L363 37"/>
<path d="M22 35l1.500 1.500M45 35v1.500M49 35v1.500M72 35v1.500M76 35v1.500M99 35v1.500M103 35v1.500M125 35v1.500M129 35v1.500M152 35v1.500M156 35v1.500M179 35v1.500M183 35v1.500M206 35v1.500M233 35v1.500M237 35v1.500M260 35v1.500M264 35v1.500" stroke-width="0.7"/>
<path d="M305 35.500l2 2l2-2M325.500 35.500l2 2l2-2M370.500 35.500l2 2l2-2" stroke-width="0.7"/>
<path d="M337 37h8" stroke-width="2.500" stroke="#666"/>
</g>
<text x="27.500" y="19" textLength="5.500" lengthAdjust="spacingAndGlyphs">2</text>
<text x="65.500" y="19" textLength="5.500" lengthAdjust="spacingAndGlyphs">4</text>
<text x="82.500" y="19" textLength="5.500" lengthAdjust="spacingAndGlyphs">9</text>
<text x="123.500" y="19" textLength="5" lengthAdjust="spacingAndGlyphs">1</text>
<text x="148" y="19" textLength="5.500" lengthAdjust="spacingAndGlyphs">5</text>
<text x="171" y="19" textLength="5.500" lengthAdjust="spacingAndGlyphs">3</text>
<text x="211" y="19" textLength="5.500" lengthAdjust="spacingAndGlyphs">6</text>
<text x="353.500" y="19" textLength="5.500" lengthAdjust="spacingAndGlyphs">7</text>
<text x="364.500" y="19" textLength="5.500" lengthAdjust="spacingAndGlyphs">8</text>
</svg>
<div style="left:427px;top:288px;width:1px;height:15px;background:#000"></div>
<!-- h scrollbar -->
<div style="left:256px;top:553px;width:544px;height:21px;background:#e6e6e6"></div>
<div style="left:258px;top:553.5px;width:542px;height:20.5px;background:#dadada"></div>
<div style="left:258px;top:554px;width:19px;height:19px;background:#fff;border:1px solid #ababab"></div>
<svg style="left:263px;top:558px" width="8" height="11" viewBox="0 0 8 11"><path d="M6.500 0.800V10.200L1 5.500Z" fill="#777"/></svg>
<div style="left:277px;top:554px;width:236px;height:19px;background:#fff;border:1px solid #ababab"></div>
<div style="left:794.500px;top:554px;width:12px;height:19px;background:#fff;border:1px solid #9a9a9a"></div>
<div id="status"></div>
<div class="st" id="s1" style="left:-17.5px">第 2 页，共 5 页</div>
<div class="st" id="s2" style="left:133px">2068 个字</div>
<svg style="left:226px;top:579px" width="21" height="17" viewBox="0 0 21 17"><path d="M9.500 1.500H1.500V13.500H9.500M9.500 1.500V15.500M9.500 1.500H18V3.300M18 11.800V13.500H9.500M8.300 14.300L9.500 15.800L10.700 14.300" fill="none" stroke="#666" stroke-width="1"/><path d="M12.500 5.300L18 10.800M18 5.300L12.500 10.800" stroke="#777" stroke-width="1.900" fill="none"/></svg>
<div class="st" id="s3" style="left:267px">中文(中国)</div>
<svg style="left:457px;top:579px" width="19" height="17" viewBox="0 0 19 17"><path d="M9.500 1.500H1.500V13.500H9.500M9.500 1.500H17.500V13.500H9.500M9.500 0.800V15.500M8.300 14.200L9.500 15.800L10.700 14.200" fill="none" stroke="#666" stroke-width="1"/><path d="M3.300 4H7.800M3.300 6.500H7.800M3.300 9H7.800M3.300 11.500H7.800M11.200 4H15.700M11.200 6.500H15.700M11.200 9H15.700M11.200 11.500H15.700" stroke="#666" stroke-width="0.900"/></svg>
<div style="left:492px;top:574.5px;width:50px;height:23px;background:#c6c6c6"></div>
<svg style="left:507px;top:579px" width="20" height="18" viewBox="0 0 20 18"><rect x="1.700" y="1.500" width="15.800" height="15" fill="none" stroke="#555" stroke-width="1.200"/><path d="M3.500 4.500H15.700M3.500 7.500H15.700M3.500 10.500H15.700M3.500 13.500H15.700" stroke="#555" stroke-width="0.900"/></svg>
<svg style="left:558px;top:579px" width="20" height="18" viewBox="0 0 20 18"><path d="M9 14.500H1.500V1.500H14.500V8" fill="none" stroke="#666" stroke-width="1"/><path d="M3.500 4.500H12.500M3.500 7H12.500M3.500 9.500H9M3.500 12H8" stroke="#666" stroke-width="0.900"/><circle cx="13.500" cy="12.500" r="4.300" fill="#666"/><path d="M11 10.500q2 1 1.500 3t2 2M14 9q1 2 3.500 2" stroke="#f3f3f3" stroke-width="0.800" fill="none"/></svg>
<div style="left:599px;top:587px;width:9px;height:1px;background:#333"></div>
<div style="left:615px;top:588px;width:125px;height:1px;background:#8a8a8a"></div>
<div style="left:649px;top:581px;width:6px;height:14px;background:#6a6a6a"></div>
<svg style="left:746px;top:583px" width="10" height="10" viewBox="0 0 10 10"><path d="M0.500 5H9.500M5 0.500V9.500" stroke="#444" stroke-width="1.300"/></svg>
<div class="st" id="s4" style="left:772.5px;font-size:17px;color:#222;top:580px">60%</div>
<svg id="wm2" style="left:650px;top:566px" width="146" height="32" viewBox="0 0 146 32"><text x="6" y="24" font-family="Liberation Serif, serif" font-size="31" fill="#8a8a8a" fill-opacity="0.700" textLength="129" lengthAdjust="spacingAndGlyphs">www.cndao.com</text></svg>
</div></div>
<svg id="ell" style="position:absolute;left:14px;top:560.5px" width="120" height="44" viewBox="0 0 120 44"><defs><filter id="sh" x="-20%" y="-30%" width="140%" height="170%"><feGaussianBlur stdDeviation="1.500"/></filter></defs><ellipse cx="58" cy="26" rx="44" ry="14" fill="none" stroke="#555" stroke-opacity="0.550" stroke-width="3.500" filter="url(#sh)"/><ellipse cx="56" cy="23" rx="44" ry="14" fill="none" stroke="#e11b12" stroke-width="3.600"/></svg>
</body>
</html>
